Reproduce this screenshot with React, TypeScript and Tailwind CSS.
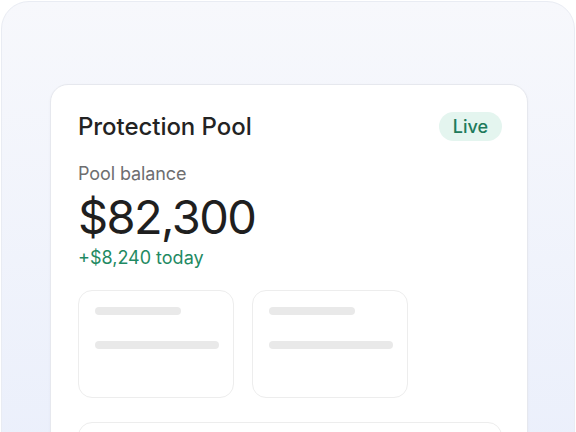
export default function App() {
  return (
    <div className="w-[576px] h-[432px] overflow-hidden bg-white font-['Inter',sans-serif]">
      <div className="mx-px mt-px h-[520px] rounded-[28px] border border-[#e9ecf3] bg-gradient-to-b from-[#f7f8fc] to-[#e9eefb] pl-[48px] pr-[46px] pt-[82px]">
        <div className="rounded-[18px] border border-[#e6e8ee] bg-white pl-[27px] pr-[25px] pt-[27px] pb-10 shadow-[0_1px_3px_rgba(30,40,80,0.04)]">
          <div className="flex h-[29px] items-center justify-between">
            <span className="text-[24px] font-[450] text-[#232323] tracking-[-0.05px]">Protection Pool</span>
            <span className="rounded-full bg-[#e4f5ef] px-[14px] py-[3px] text-[18px] leading-[23px] font-[450] text-[#207a5b]">
              Live
            </span>
          </div>
          <div className="mt-[21px] text-[18px] leading-6 text-[#6e6e70] tracking-[-0.1px]">Pool balance</div>
          <div className="mt-2 text-[47px] leading-[46px] text-[#1f1f1f] tracking-[-1.6px]">$82,300</div>
          <div className="mt-[6px] text-[18px] leading-6 text-[#1f8a63]">+$8,240 today</div>
          <div className="mt-5 flex gap-[18px]">
            {[0, 1].map((i) => (
              <div key={i} className="h-[108px] w-[156px] rounded-[14px] border border-[#ededed] px-4 pt-4">
                <div className="h-2 w-[86px] rounded-full bg-[#e9e9e9]" />
                <div className="mt-[26px] h-2 w-[124px] rounded-full bg-[#e9e9e9]" />
              </div>
            ))}
          </div>
          <div className="mt-6 h-[80px] rounded-[14px] border border-[#ededed]" />
        </div>
      </div>
    </div>
  )
}
